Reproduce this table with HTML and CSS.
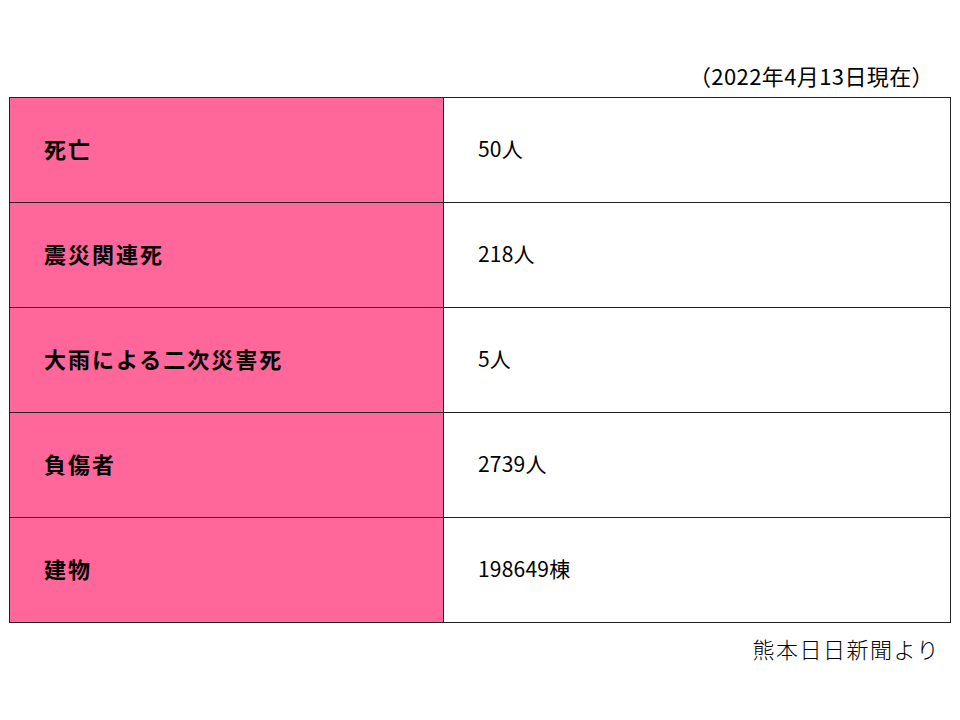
FILE: index.html
```html
<!DOCTYPE html>
<html lang="ja">
<head>
<meta charset="utf-8">
<link rel="stylesheet" href="styles.css">
</head>
<body>
<div class="slide">
  <div class="date">（2022年4月13日現在）</div>
  <table class="tbl">
    <tr><th>死亡</th><td>50人</td></tr>
    <tr><th>震災関連死</th><td>218人</td></tr>
    <tr><th>大雨による二次災害死</th><td>5人</td></tr>
    <tr><th>負傷者</th><td>2739人</td></tr>
    <tr><th>建物</th><td>198649棟</td></tr>
  </table>
  <div class="src">熊本日日新聞より</div>
</div>
</body>
</html>
```
FILE: styles.css
```css
html, body { margin: 0; padding: 0; background: #fff; }
body { font-family: "Noto Sans CJK JP", "Noto Sans", sans-serif; color: #000; }
.slide { width: 960px; height: 720px; padding-top: 58px; box-sizing: border-box; }
.date { text-align: right; padding-right: 26px; font-size: 22px; line-height: 34px; height: 39px; letter-spacing: 0.4px; }
.tbl { margin-left: 9px; width: 942px; border-collapse: collapse; table-layout: fixed; }
.tbl th, .tbl td { height: 105px; border: 1px solid #222; padding: 0 0 5px 34px; text-align: left; vertical-align: middle; box-sizing: border-box; }
.tbl th { width: 434px; background: #ff6699; font-weight: bold; font-size: 22px; letter-spacing: 2px; }
.tbl td { font-weight: normal; font-size: 21px; letter-spacing: 0.2px; }
.src { text-align: right; padding-right: 20px; font-size: 22px; letter-spacing: 1.5px; line-height: 30px; margin-top: 10px; font-weight: 300; }
```
